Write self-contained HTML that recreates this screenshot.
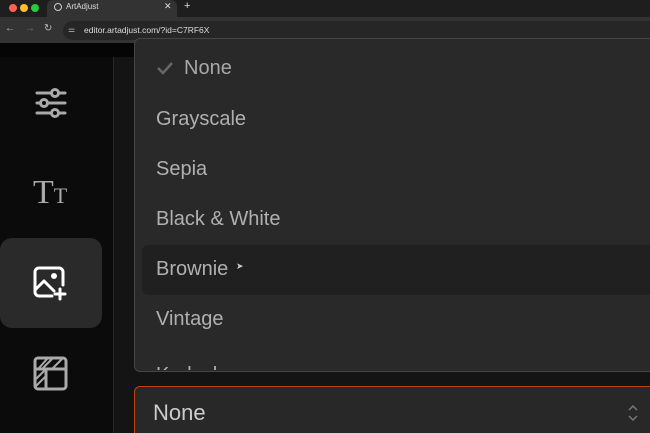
<!DOCTYPE html>
<html style="width:650px;height:433px;overflow:hidden"><head><style>
*{margin:0;padding:0;box-sizing:border-box}
body{width:650px;height:433px;overflow:hidden;background:#141414;font-family:"Liberation Sans",sans-serif;position:relative}
.abs{position:absolute}
.item{position:absolute;left:156px;font-size:20px;color:#b0b0b0}
</style></head><body>
<div class="abs" style="left:0;top:0;width:650px;height:17px;background:#1e1e1e"></div>
<div class="abs" style="left:9px;top:4px;width:8px;height:8px;border-radius:50%;background:#fe5f57"></div>
<div class="abs" style="left:20px;top:4px;width:8px;height:8px;border-radius:50%;background:#febc2e"></div>
<div class="abs" style="left:31px;top:4px;width:8px;height:8px;border-radius:50%;background:#28c840"></div>
<div class="abs" style="left:47px;top:0;width:130px;height:18px;background:#333;border-radius:6px 6px 0 0"></div>
<div class="abs" style="left:54px;top:3px;width:8px;height:8px;border-radius:50%;border:1px solid #ccc"></div>
<div class="abs" style="left:66px;top:2px;font-size:8px;color:#ddd">ArtAdjust</div>
<div class="abs" style="left:164px;top:1px;font-size:9px;color:#ddd">✕</div>
<div class="abs" style="left:184px;top:0px;font-size:11px;color:#ddd">+</div>
<div class="abs" style="left:0;top:17px;width:650px;height:26px;background:#333"></div>
<div class="abs" style="left:5px;top:23px;font-size:10px;color:#bbb">←</div>
<div class="abs" style="left:25px;top:23px;font-size:10px;color:#777">→</div>
<div class="abs" style="left:44px;top:23px;font-size:10px;color:#bbb">↻</div>
<div class="abs" style="left:63px;top:21px;width:600px;height:19px;border-radius:10px;background:#262626"></div>
<div class="abs" style="left:68px;top:25px;font-size:8px;color:#bbb">⚌</div>
<div class="abs" style="left:84px;top:25px;font-size:8.5px;color:#ddd">editor.artadjust.com/?id=C7RF6X</div>
<!-- sidebar -->
<div class="abs" style="left:0;top:43px;width:113px;height:390px;background:#0b0b0b"></div>
<div class="abs" style="left:0;top:43px;width:134px;height:14px;background:#050505"></div>
<div class="abs" style="left:113px;top:57px;width:1px;height:376px;background:#2a2a2a"></div>
<div class="abs" style="left:0;top:238px;width:102px;height:90px;border-radius:12px;background:#2a2a2a"></div>
<svg class="abs" style="left:34px;top:86px" width="34" height="34" viewBox="0 0 34 34" fill="none" stroke="#aaa" stroke-width="3" stroke-linecap="round">
<line x1="3" y1="7" x2="31" y2="7"/><line x1="3" y1="17" x2="31" y2="17"/><line x1="3" y1="27" x2="31" y2="27"/>
<circle cx="21" cy="7" r="3.5" fill="#0b0b0b"/><circle cx="10" cy="17" r="3.5" fill="#0b0b0b"/><circle cx="21" cy="27" r="3.5" fill="#0b0b0b"/></svg>
<div class="abs" style="left:33px;top:174px;font-family:'Liberation Serif',serif;color:#aaa;font-size:34px;line-height:38px">T<span style="font-size:22px">T</span></div>
<svg class="abs" style="left:32px;top:265px" width="38" height="38" viewBox="0 0 38 38" fill="none" stroke="#fff" stroke-width="3" stroke-linecap="round" stroke-linejoin="round">
<path d="M20 31H7a4 4 0 0 1-4-4V7a4 4 0 0 1 4-4h20a4 4 0 0 1 4 4v13"/><path d="M3 25l9-9 10 10"/><circle cx="22" cy="11" r="1.5" fill="#fff"/><path d="M28 24v10M23 29h10"/></svg>
<svg class="abs" style="left:33px;top:356px" width="36" height="36" viewBox="0 0 36 36" fill="none" stroke="#aaa" stroke-width="3">
<rect x="2" y="2" width="31" height="31" rx="3"/><path d="M2 13h31M13 13v20"/><path d="M6 12l8-9M2 24l11-11M10 12l9-9M20 12l9-9M2 31l11-11" stroke-width="2"/></svg>
<!-- dropdown -->
<div class="abs" style="left:134px;top:38px;width:530px;height:334px;background:#292929;border:1px solid #454545;border-radius:6px;overflow:hidden">
<div class="abs" style="left:7px;top:206px;width:520px;height:50px;background:#202020;border-radius:6px"></div>
</div>
<svg class="abs" style="left:156px;top:61px" width="18" height="14" viewBox="0 0 18 14" fill="none" stroke="#666" stroke-width="2.5"><path d="M2 7l5 5 9-10"/></svg>
<div class="item" style="left:184px;top:57px;color:#a8a8a8">None</div>
<div class="item" style="top:108px">Grayscale</div>
<div class="item" style="top:158px">Sepia</div>
<div class="item" style="top:208px">Black &amp; White</div>
<div class="item" style="top:258px">Brownie</div>
<div class="abs" style="left:236px;top:261px;font-size:9px;color:#ccc">➤</div>
<div class="item" style="top:308px">Vintage</div>
<div class="abs" style="left:156px;top:360px;width:200px;height:10px;overflow:hidden"><div style="font-size:20px;color:#b0b0b0;margin-top:4px">Kodachrome</div></div>
<!-- select -->
<div class="abs" style="left:134px;top:386px;width:530px;height:60px;background:#282828;border:1px solid #c2410c;border-radius:6px"></div>
<div class="abs" style="left:153px;top:400px;font-size:22px;color:#ccc">None</div>
<svg class="abs" style="left:627px;top:404px" width="12" height="18" viewBox="0 0 12 18" fill="none" stroke="#777" stroke-width="1.5"><path d="M2 6l4-4 4 4M2 12l4 4 4-4"/></svg>
</body></html>
